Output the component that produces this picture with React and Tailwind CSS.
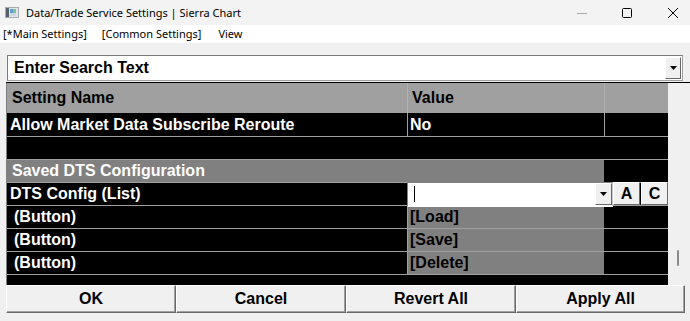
export default function App() {
  const sans = "font-['Liberation_Sans',Arial,sans-serif]";
  const Tri = () => (
    <svg width="7" height="4" viewBox="0 0 7 4"><path d="M0 0 H7 L3.5 4 Z" fill="#000" /></svg>
  );
  const ButtonRow = ({ value }) => (
    <div className="h-[23px] flex bg-black border-b border-[#a0a0a0]">
      <div className="w-[400px] pl-[7px] flex items-center text-white">(Button)</div>
      <div className="w-[197px] bg-[#808080] border-l border-[#a0a0a0] pl-[2px] flex items-center text-black">{value}</div>
      <div className="w-[64px]" />
    </div>
  );
  const Btn = ({ label, w }) => (
    <div
      className={`h-full flex items-center justify-center bg-[#f0f0f0] border-t border-l border-white border-b border-r border-b-[#696969] border-r-[#696969] shadow-[inset_-1px_-1px_0_#a0a0a0] font-bold text-[16px] text-black ${w}`}
    >
      {label}
    </div>
  );
  return (
    <div className={`w-[690px] h-[321px] bg-[#f0f0f0] overflow-hidden flex flex-col ${sans}`}>
      {/* title bar */}
      <div className="h-[25px] flex items-center bg-[#f3f3f3] shrink-0">
        <svg className="ml-[5px]" width="14" height="11" viewBox="0 0 14 11">
          <rect x="0.5" y="0.5" width="13" height="10" fill="#e4e6e8" stroke="#a8adb2" />
          <rect x="1" y="1" width="3" height="9" fill="#55616d" />
          <rect x="5" y="2" width="3" height="4" fill="#5d9fd0" />
          <rect x="8" y="2" width="3" height="4" fill="#7cc39a" />
          <rect x="5" y="6" width="6" height="3" fill="#cfd8e0" />
        </svg>
        <span className="ml-[7px] text-[11px] font-['Noto_Sans',sans-serif] text-black leading-none">
          Data/Trade Service Settings | Sierra Chart
        </span>
        <div className="ml-auto flex items-center pr-[12px]">
          <svg width="10" height="10" viewBox="0 0 10 10"><path d="M0 5.5 H10" stroke="#a8a8a8" strokeWidth="1" /></svg>
          <svg className="ml-[35px]" width="10" height="10" viewBox="0 0 10 10"><rect x="0.5" y="0.5" width="9" height="9" fill="none" stroke="#000" strokeWidth="1" rx="1" /></svg>
          <svg className="ml-[36px]" width="10" height="10" viewBox="0 0 10 10"><path d="M0 0 L10 10 M10 0 L0 10" stroke="#000" strokeWidth="1" /></svg>
        </div>
      </div>
      {/* menu bar */}
      <div className="h-[18px] bg-white flex items-center text-[11px] font-['Noto_Sans',sans-serif] text-black shrink-0">
        <span className="ml-[3px]">[*Main Settings]</span>
        <span className="ml-[15px]">[Common Settings]</span>
        <span className="ml-[17px]">View</span>
      </div>
      {/* search */}
      <div className="mt-[12px] ml-[7px] w-[676px] h-[26px] bg-white border border-t-[#7a7a7a] border-l-[#7a7a7a] border-b-[#a0a0a0] border-r-[#a0a0a0] flex items-center shrink-0">
        <span className="pl-[6px] font-bold text-[16px] text-black">Enter Search Text</span>
        <div className="ml-auto mr-[1px] w-[16px] h-[22px] bg-[#f0f0f0] border border-t-white border-l-white border-b-[#696969] border-r-[#696969] flex items-center justify-center">
          <Tri />
        </div>
      </div>
      {/* table */}
      <div className="mt-[1px] ml-[6px] w-[684px] h-[203px] border-t border-black flex shrink-0">
        <div className="w-[1px] bg-[#808080]" />
        <div className="w-[661px] flex flex-col text-[16px] font-bold relative">
          <div className="h-[30px] flex bg-[#a0a0a0] text-black">
            <div className="w-[400px] pl-[5px] flex items-center">Setting Name</div>
            <div className="w-[197px] border-l border-[#b0b0b0] pl-[4px] flex items-center">Value</div>
            <div className="w-[64px] border-l border-[#b0b0b0]" />
          </div>
          <div className="h-[24px] flex bg-black border-b border-[#a0a0a0] text-white">
            <div className="w-[400px] pl-[3px] flex items-center">Allow Market Data Subscribe Reroute</div>
            <div className="w-[197px] border-l border-[#a0a0a0] pl-[2px] flex items-center">No</div>
            <div className="w-[64px] border-l border-[#a0a0a0]" />
          </div>
          <div className="h-[23px] bg-black border-b border-[#a0a0a0]" />
          <div className="h-[23px] flex bg-black border-b border-[#a0a0a0]">
            <div className="w-[597px] bg-[#808080] pl-[5px] flex items-center text-white">Saved DTS Configuration</div>
            <div className="w-[64px]" />
          </div>
          <div className="h-[23px] flex bg-black border-b border-[#a0a0a0] relative">
            <div className="w-[400px] pl-[3px] flex items-center text-white">DTS Config (List)</div>
            <div className="w-[197px]" />
            <div className="w-[64px]" />
            {/* overlay combobox */}
            <div className="absolute left-[400px] top-[-1px] w-[206px] h-[25px] bg-white border border-t-[#808080] border-l-[#808080] border-r-[#c8c8c8] border-b-white">
              <div className="absolute left-[6px] top-[3px] w-[1px] h-[16px] bg-black" />
              <div className="absolute right-[0px] top-[0px] w-[17px] h-[22px] bg-[#f0f0f0] border border-t-white border-l-white border-b-[#696969] border-r-[#696969] flex items-center justify-center">
                <Tri />
              </div>
            </div>
            <div className="absolute left-[606px] top-[-1px] w-[27px] h-[23px] bg-[#f0f0f0] border border-t-white border-l-white border-b-[#696969] border-r-[#696969] flex items-center justify-center text-black">A</div>
            <div className="absolute left-[634px] top-[-1px] w-[27px] h-[23px] bg-[#f0f0f0] border border-t-white border-l-white border-b-[#696969] border-r-[#696969] flex items-center justify-center text-black">C</div>
          </div>
          <ButtonRow value="[Load]" />
          <ButtonRow value="[Save]" />
          <ButtonRow value="[Delete]" />
          <div className="flex-1 bg-black" />
        </div>
        <div className="w-[22px] bg-[#f0f0f0] flex flex-col">
          <div className="mt-[167px] ml-[9px] w-[2px] h-[16px] bg-[#8a8a8a] rounded-full" />
        </div>
      </div>
      {/* bottom buttons */}
      <div className="ml-[6px] h-[28px] flex shrink-0">
        <Btn label="OK" w="w-[170px]" />
        <Btn label="Cancel" w="w-[170px]" />
        <Btn label="Revert All" w="w-[170px]" />
        <Btn label="Apply All" w="w-[169px]" />
      </div>
    </div>
  );
}
